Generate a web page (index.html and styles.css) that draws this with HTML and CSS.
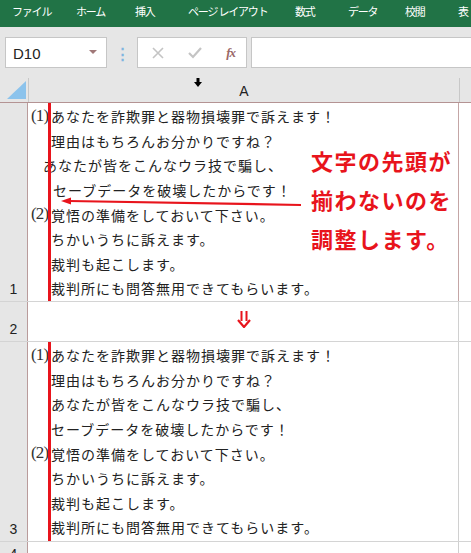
FILE: index.html
```html
<!DOCTYPE html>
<html lang="ja">
<head>
    <meta charset="UTF-8">
    <title>Excel</title>
    <link rel="stylesheet" href="styles.css">
</head>
<body>
    <div class="ribbon">
        <span class="tab">ファイル</span>
        <span class="tab">ホーム</span>
        <span class="tab">挿入</span>
        <span class="tab">ページ&nbsp;レイアウト</span>
        <span class="tab">数式</span>
        <span class="tab">データ</span>
        <span class="tab">校閲</span>
        <span class="tab">表</span>
    </div>

    <div class="formula-bar">
        <div class="name-box">
            <span>D10</span>
            <span class="drop"></span>
        </div>
        <div class="grip">⋮</div>
        <div class="fx-buttons">
            <svg width="12" height="12" viewBox="0 0 12 12"><path d="M1 1L11 11M11 1L1 11" stroke="#c4c4c4" stroke-width="1.6" fill="none"/></svg>
            <svg width="14" height="12" viewBox="0 0 14 12"><path d="M1 6L5 10L13 1" stroke="#c4c4c4" stroke-width="2.2" fill="none"/></svg>
            <span class="fx">fx</span>
        </div>
        <div class="formula-input"></div>
    </div>

    <div class="sheet">
        <div class="col-head">
            <div class="corner">
                <svg width="20" height="19" viewBox="0 0 20 19"><polygon points="19,0 19,18 0,18" fill="#8cc3ec"/></svg>
            </div>
            <div class="col-a">
                <svg class="col-cursor" width="8" height="9" viewBox="0 0 8 9"><path d="M2.5 0H5.5V4H8L4 9L0 4H2.5Z" fill="#000"/></svg>
                A
            </div>
            <div class="col-b"></div>
        </div>

        <div class="row big first">
            <div class="row-num">1</div>
            <div class="cell">
                <div class="line"><span class="mark">(1)</span><span>あなたを詐欺罪と器物損壊罪で訴えます！</span></div>
                <div class="line"><span class="mark"></span><span>理由はもちろんお分かりですね？</span></div>
                <div class="line"><span class="mark"></span><span class="shift-left">あなたが皆をこんなウラ技で騙し、</span></div>
                <div class="line"><span class="mark"></span><span class="shift-right">セーブデータを破壊したからです！</span></div>
                <div class="line"><span class="mark">(2)</span><span>覚悟の準備をしておいて下さい。</span></div>
                <div class="line"><span class="mark"></span><span>ちかいうちに訴えます。</span></div>
                <div class="line"><span class="mark"></span><span>裁判も起こします。</span></div>
                <div class="line"><span class="mark"></span><span>裁判所にも問答無用できてもらいます。</span></div>

                <svg class="note-arrow" width="250" height="12" viewBox="0 0 250 12">
                    <path d="M240 9L8 5" stroke="#e8141c" stroke-width="2.2" fill="none"/>
                    <polygon points="0,5 10,1.5 10,8.5" fill="#e8141c"/>
                </svg>
                <div class="note">文字の先頭が<br>揃わないのを<br>調整します。</div>
            </div>
            <div class="cell-b"></div>
        </div>

        <div class="row small">
            <div class="row-num">2</div>
            <div class="cell center">
                <svg width="14" height="17" viewBox="0 0 14 17">
                    <path d="M4.5 0V10M9.5 0V10" stroke="#e8141c" stroke-width="2" fill="none"/>
                    <path d="M1 9L7 16L13 9" stroke="#e8141c" stroke-width="2.2" fill="none"/>
                </svg>
            </div>
            <div class="cell-b"></div>
        </div>

        <div class="row big">
            <div class="row-num">3</div>
            <div class="cell">
                <div class="line"><span class="mark">(1)</span><span>あなたを詐欺罪と器物損壊罪で訴えます！</span></div>
                <div class="line"><span class="mark"></span><span>理由はもちろんお分かりですね？</span></div>
                <div class="line"><span class="mark"></span><span>あなたが皆をこんなウラ技で騙し、</span></div>
                <div class="line"><span class="mark"></span><span>セーブデータを破壊したからです！</span></div>
                <div class="line"><span class="mark">(2)</span><span>覚悟の準備をしておいて下さい。</span></div>
                <div class="line"><span class="mark"></span><span>ちかいうちに訴えます。</span></div>
                <div class="line"><span class="mark"></span><span>裁判も起こします。</span></div>
                <div class="line"><span class="mark"></span><span>裁判所にも問答無用できてもらいます。</span></div>
            </div>
            <div class="cell-b"></div>
        </div>

        <div class="row tail">
            <div class="row-num">4</div>
            <div class="cell"></div>
            <div class="cell-b"></div>
        </div>
    </div>
</body>
</html>
```

FILE: styles.css
```css
* {
    box-sizing: border-box;
    margin: 0;
    padding: 0;
}

body {
    width: 471px;
    height: 553px;
    overflow: hidden;
    font-family: 'Noto Sans CJK JP', 'Noto Sans', sans-serif;
    background: #fff;
}

/* ribbon tabs */
.ribbon {
    height: 27px;
    background-color: #217346;
    display: grid;
    grid-template-columns: 64px 59px 53px 107px 53px 57px 53px 40px;
    align-items: center;
    padding-left: 12px;
    white-space: nowrap;
    overflow: hidden;
}

.tab {
    color: #fff;
    font-size: 11px;
    letter-spacing: -1.2px;
    line-height: 1;
    padding-bottom: 4px;
}

/* name box + formula */
.formula-bar {
    background-color: #e6e6e6;
    height: 51px;
    padding: 10px 0 0 5px;
    display: flex;
    align-items: flex-start;
}

.name-box {
    width: 102px;
    height: 31px;
    background: #fff;
    border: 1px solid #c6c6c6;
    display: flex;
    align-items: center;
    justify-content: space-between;
    padding: 2px 9px 0 7px;
    font-family: 'Liberation Sans', sans-serif;
    font-size: 15px;
    color: #222;
}

.drop {
    width: 0;
    height: 0;
    border-left: 4px solid transparent;
    border-right: 4px solid transparent;
    border-top: 4px solid #a07878;
    margin-bottom: 4px;
}

.grip {
    width: 30px;
    text-align: center;
    color: #7fb4e0;
    font-size: 15px;
    line-height: 31px;
    font-weight: bold;
}

.fx-buttons {
    width: 110px;
    height: 31px;
    background: #fff;
    border: 1px solid #c6c6c6;
    display: flex;
    align-items: center;
    justify-content: space-between;
    padding: 0 11px 0 14px;
}

.fx {
    font-family: 'Liberation Serif', serif;
    font-style: italic;
    font-weight: bold;
    font-size: 13px;
    color: #9a6868;
    letter-spacing: -1px;
}

.formula-input {
    flex: 1;
    height: 31px;
    margin-left: 4px;
    background: #fff;
    border: 1px solid #c6c6c6;
    border-right: none;
}

/* sheet grid */
.sheet {
    background: #fff;
}

.col-head {
    display: flex;
    height: 25px;
    background-color: #e6e6e6;
    border-bottom: 1px solid #b49393;
}

.corner {
    width: 28px;
    display: flex;
    align-items: flex-end;
    justify-content: flex-end;
    padding: 0 1px 2px 0;
}

.col-a {
    width: 432px;
    border-left: 1px solid #c8c8c8;
    border-right: 1px solid #c8c8c8;
    text-align: center;
    font-family: 'Liberation Sans', sans-serif;
    font-size: 14px;
    color: #222;
    line-height: 25px;
    padding-top: 1px;
    position: relative;
}

.col-cursor {
    position: absolute;
    left: 165px;
    top: 0;
}

.col-b {
    flex: 1;
}

.row {
    display: flex;
    border-bottom: 1px solid #d4d4d4;
}

.row.big {
    height: 200px;
}

.row.first {
    height: 199px;
}

.row.small {
    height: 40px;
}

.row.tail {
    height: 20px;
}

.row-num {
    width: 28px;
    background-color: #e6e6e6;
    border-right: 1px solid #b99b9b;
    display: flex;
    align-items: flex-end;
    justify-content: center;
    padding-bottom: 2px;
    font-family: 'Liberation Sans', sans-serif;
    font-size: 14px;
    color: #222;
    line-height: 20px;
}

.row.tail .row-num {
    align-items: flex-start;
    padding-top: 2px;
}

.cell {
    width: 431px;
    border-right: 1px solid #d0d0d0;
    padding: 1px 0 0 3px;
    position: relative;
}

.row.first .cell {
    border-right-color: #c4a6a6;
}

.cell-b {
    flex: 1;
}

.line {
    display: flex;
    height: 24.6px;
    align-items: center;
    font-size: 14px;
    letter-spacing: 1px;
    color: #222;
    white-space: nowrap;
}

.mark {
    width: 20px;
    letter-spacing: -0.8px;
    font-family: 'Liberation Serif', serif;
    font-size: 17px;
    color: #333;
    padding-bottom: 1px;
}

.shift-left {
    margin-left: -8px;
}

.shift-right {
    margin-left: 2px;
}

/* red guide drawn over the cells */
.row.big .cell::before {
    content: '';
    position: absolute;
    left: 20px;
    top: 0;
    bottom: 0;
    width: 3px;
    background-color: #e8141c;
}

.note-arrow {
    position: absolute;
    left: 33px;
    top: 93px;
}

.note {
    position: absolute;
    left: 283px;
    top: 38px;
    font-size: 22px;
    font-weight: bold;
    line-height: 39px;
    letter-spacing: 1.5px;
    color: #e8141c;
}

.cell.center {
    display: flex;
    justify-content: center;
    align-items: center;
    padding: 0 0 4px 2px;
}
```
